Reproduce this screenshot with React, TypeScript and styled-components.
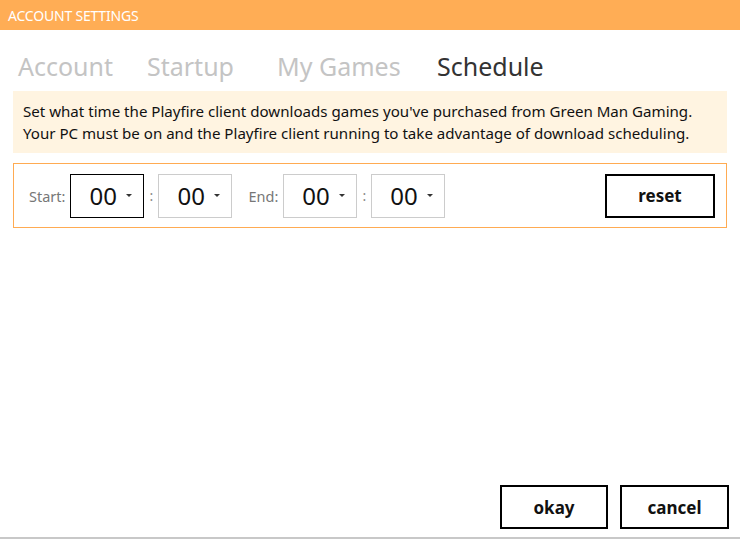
import { createGlobalStyle } from 'styled-components';
import styled from 'styled-components';

const GlobalStyle = createGlobalStyle`
    html, body {
        margin: 0;
        padding: 0;
        background: #fff;
    }
    body {
        font-family: 'Noto Sans', 'Open Sans', sans-serif;
    }
`;

const Window = styled.div`
    width: 740px;
    height: 539px;
    display: flex;
    flex-direction: column;
    box-sizing: border-box;
    border-bottom: 2px solid #c8c8c8;
`;

const TitleBar = styled.div`
    height: 30px;
    background: #ffad55;
    color: #fff;
    font-size: 14px;
    display: flex;
    align-items: center;
    padding-left: 8px;
    letter-spacing: -0.2px;
`;

const Tabs = styled.div`
    display: flex;
    padding: 16px 0 0 18px;
    height: 45px;
    box-sizing: content-box;
`;

const Tab = styled.div<{ $active?: boolean; $w?: number }>`
    font-size: 25px;
    line-height: 40px;
    color: ${({ $active }) => ($active ? '#333' : '#c4c4c4')};
    width: ${({ $w }) => ($w ? `${$w}px` : 'auto')};
`;

const Notice = styled.div`
    margin: 0 13px;
    padding: 9px 10px 9px;
    background: #fff4e1;
    color: #111;
    font-size: 15.1px;
    line-height: 22px;
`;

const SchedulePanel = styled.div`
    margin: 10px 13px 0;
    height: 65px;
    box-sizing: border-box;
    border: 1px solid #ffab52;
    display: flex;
    align-items: center;
    padding: 0 11px 0 15px;
`;

const Label = styled.span`
    font-size: 14.5px;
    color: #777;
    margin-right: 5px;
`;

const Colon = styled.span`
    font-size: 14px;
    color: #888;
    width: 14px;
    text-align: center;
`;

const Select = styled.div<{ $focused?: boolean }>`
    width: 74px;
    height: 44px;
    box-sizing: border-box;
    border: 1px solid ${({ $focused }) => ($focused ? '#000' : '#ccc')};
    display: flex;
    align-items: center;
    padding-left: 18px;
    font-size: 24px;
    color: #111;
    position: relative;

    &::after {
        content: '';
        position: absolute;
        right: 11px;
        top: 19px;
        border-left: 3px solid transparent;
        border-right: 3px solid transparent;
        border-top: 3px solid #333;
    }
`;

const FieldGap = styled.div`
    width: 16px;
`;

const Spacer = styled.div`
    flex: 1;
`;

const OutlineButton = styled.button<{ $w: number }>`
    width: ${({ $w }) => $w}px;
    height: 44px;
    box-sizing: border-box;
    border: 2px solid #000;
    background: #fff;
    font-family: 'Noto Sans', 'Open Sans', sans-serif;
    font-weight: 700;
    font-size: 17px;
    color: #111;
    padding: 0;
    cursor: pointer;
`;

const Footer = styled.div`
    margin-top: auto;
    display: flex;
    justify-content: flex-end;
    gap: 12px;
    padding: 0 11px 8px 0;
`;

export default function App() {
    return (
        <>
            <GlobalStyle />
            <Window>
                <TitleBar>ACCOUNT SETTINGS</TitleBar>
                <Tabs>
                    <Tab $w={129}>Account</Tab>
                    <Tab $w={130}>Startup</Tab>
                    <Tab $w={160}>My Games</Tab>
                    <Tab $active>Schedule</Tab>
                </Tabs>
                <Notice>
                    Set what time the Playfire client downloads games you've purchased from Green Man Gaming.
                    <br />
                    Your PC must be on and the Playfire client running to take advantage of download scheduling.
                </Notice>
                <SchedulePanel>
                    <Label>Start:</Label>
                    <Select $focused>00</Select>
                    <Colon>:</Colon>
                    <Select>00</Select>
                    <FieldGap />
                    <Label>End:</Label>
                    <Select>00</Select>
                    <Colon>:</Colon>
                    <Select>00</Select>
                    <Spacer />
                    <OutlineButton $w={110}>reset</OutlineButton>
                </SchedulePanel>
                <Footer>
                    <OutlineButton $w={108}>okay</OutlineButton>
                    <OutlineButton $w={109}>cancel</OutlineButton>
                </Footer>
            </Window>
        </>
    );
}
